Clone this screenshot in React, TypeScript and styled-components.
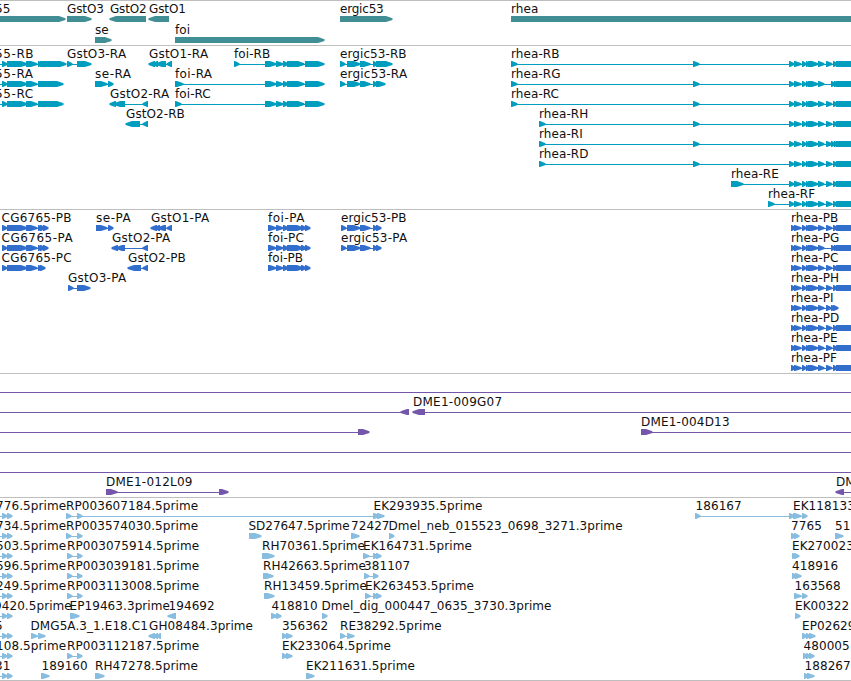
import React from 'react'
import styled, { createGlobalStyle } from 'styled-components'

type Span = [number, number]

interface Feature {
  name?: string
  // where the name starts, defaults to the start of the first block
  at?: number
  blocks: Span[]
  line?: Span
  reverse?: boolean
  spacing?: number
}

interface TrackData {
  id: string
  color: string
  rowHeight: number
  gap: number
  rows: Feature[][]
}

const VIEW_WIDTH = 851
const OFF = 870

const GlobalStyle = createGlobalStyle`
  body {
    margin: 0;
    background: #ffffff;
    overflow: hidden;
  }
`

const Viewer = styled.main`
  display: flex;
  flex-direction: column;
  width: ${VIEW_WIDTH}px;
  height: 681px;
  overflow: hidden;
  background: #ffffff;
  border-bottom: 1px solid #bebebe;
  box-sizing: border-box;
`

const TrackPanel = styled.section<{ $gap: number }>`
  display: flex;
  flex-direction: column;
  flex: none;
  border-top: 1px solid #bebebe;
  padding-bottom: ${({ $gap }) => $gap}px;
`

const Row = styled.div<{ $height: number }>`
  position: relative;
  height: ${({ $height }) => $height}px;
`

const Name = styled.span<{ $x: number; $spacing: number }>`
  position: absolute;
  top: 0;
  left: ${({ $x }) => $x}px;
  font-family: 'DejaVu Sans', sans-serif;
  font-size: 12px;
  line-height: 16px;
  letter-spacing: ${({ $spacing }) => $spacing}px;
  color: #111111;
  white-space: pre;
`

const Glyphs = styled.svg`
  display: block;
  overflow: hidden;
`

// long blocks keep a square tail, short ones are just the head
const arrow = ([from, to]: Span, reverse?: boolean) => {
  const head = Math.min(to - from - 1, 6)
  const tail = reverse ? to : from
  const tip = reverse ? from : to
  const dir = reverse ? -1 : 1
  const neck = tip - dir * head
  return `M${tail} 15V21H${neck}L${tip + dir * 0.5} 18.9V17.3L${neck} 15Z`
}

// exon sets shared by several isoforms
const foi: Span[] = [[265, 276], [276, 283], [283, 288], [287, 304], [305, 324]]
const foiP: Span[] = [[268, 276], [276, 283], [283, 288], [287, 303], [301, 306], [305, 310]]
const ergic: Span[] = [[340, 345], [347, 360], [360, 370], [373, 377]]
const ergicP: Span[] = [[341, 346], [347, 360], [360, 370], [373, 377], [376, 381]]
const cg6765: Span[] = [[2, 7], [7, 27], [26, 37], [38, 42], [40, 45]]
const left55: Span[] = [[2, 7], [7, 27], [26, 37]]
const rheaMid: Span[] = [[794, 801], [802, 806], [806, 809], [808, 818], [818, 824]]
const rheaEnd: Span[] = [[826, 832], [833, 837], [836, OFF]]
const rheaShort: Span[] = [[831, 835], [834, 838], [836, OFF]]

const rheaR = (name: string, first: Span[], end: Span[] = rheaEnd): Feature => ({
  name,
  blocks: [...first, [789, 794], ...rheaMid, ...end],
})
const rheaP = (name: string, end: Span[] = rheaEnd): Feature => ({ name, blocks: [[791, 795], ...rheaMid, ...end] })

const edgeRead = (name: string, at: number): Feature => ({ name, at, blocks: [[2, 7], [7, 12]], line: [0, 12] })
const rpRead = (name: string, x = 67): Feature => ({ name, at: x, blocks: [[x, x + 5], [77, 82]] })

const through: Feature = { blocks: [], line: [0, OFF] }

const tracks: TrackData[] = [
  {
    id: 'genes',
    color: '#418f95',
    rowHeight: 21,
    gap: 2,
    rows: [
      [
        { name: '55', at: -5, blocks: [[-20, 65]] },
        { name: 'GstO3', blocks: [[67, 91]], spacing: -0.1 },
        { name: 'GstO2', blocks: [[110, 146]], reverse: true, spacing: -0.2 },
        { name: 'GstO1', blocks: [[149, 169]], reverse: true, spacing: -0.1 },
        { name: 'ergic53', blocks: [[340, 392]], spacing: -0.2 },
        { name: 'rhea', blocks: [[511, OFF]] },
      ],
      [
        { name: 'se', blocks: [[95, 111]] },
        { name: 'foi', blocks: [[175, 324]] },
      ],
    ],
  },
  {
    id: 'transcripts',
    color: '#009dbf',
    rowHeight: 20,
    gap: 3,
    rows: [
      [
        { name: '55-RB', at: -5, blocks: [...left55, [38, 42], [40, 66]], line: [0, 66], spacing: 0.6 },
        { name: 'GstO3-RA', blocks: [[67, 72], [77, 91]], spacing: 0.2 },
        { name: 'GstO1-RA', blocks: [[149, 155], [153, 158], [156, 166], [167, 172]], reverse: true, spacing: 0.2 },
        { name: 'foi-RB', blocks: [[234, 239], ...foi] },
        { name: 'ergic53-RB', blocks: [...ergic, [376, 392]] },
        rheaR('rhea-RB', [[511, 517], [693, 699]]),
      ],
      [
        { name: '55-RA', at: -5, blocks: [...left55, [38, 63]], line: [0, 63], spacing: 0.6 },
        { name: 'se-RA', blocks: [[95, 107], [108, 113]], spacing: 0.5 },
        { name: 'foi-RA', blocks: [[175, 183], ...foi], spacing: 0.35 },
        { name: 'ergic53-RA', blocks: [...ergic, [376, 385]], spacing: 0.2 },
        rheaR('rhea-RG', [[511, 517], [693, 699]], rheaShort),
      ],
      [
        { name: '55-RC', at: -5, blocks: [...left55, [38, 63]], line: [0, 63], spacing: 0.6 },
        { name: 'GstO2-RA', blocks: [[110, 116], [114, 125], [143, 148]], reverse: true, spacing: 0.2 },
        { name: 'foi-RC', blocks: [[175, 181], ...foi] },
        rheaR('rhea-RC', [[511, 517], [693, 699]]),
      ],
      [
        { name: 'GstO2-RB', blocks: [[126, 140], [143, 148]], reverse: true },
        rheaR('rhea-RH', [[539, 545], [693, 699]]),
      ],
      [rheaR('rhea-RI', [[539, 545], [693, 699]], [[826, 832], ...rheaShort])],
      [rheaR('rhea-RD', [[539, 545], [693, 699]])],
      [rheaR('rhea-RE', [[731, 743]])],
      [rheaR('rhea-RF', [[768, 774]])],
    ],
  },
  {
    id: 'proteins',
    color: '#326fcd',
    rowHeight: 20,
    gap: 3,
    rows: [
      [
        { name: 'CG6765-PB', at: 1.5, blocks: [...cg6765, [43, 48]], spacing: 0.25 },
        { name: 'se-PA', blocks: [[96, 107], [108, 113]], spacing: 0.5 },
        { name: 'GstO1-PA', blocks: [[151, 157], [155, 160], [158, 166], [167, 172]], reverse: true, spacing: 0.25 },
        { name: 'foi-PA', blocks: foiP, spacing: 0.5 },
        { name: 'ergic53-PB', blocks: ergicP },
        rheaP('rhea-PB'),
      ],
      [
        { name: 'CG6765-PA', at: 1.5, blocks: [...cg6765, [43, 48]], spacing: 0.5 },
        { name: 'GstO2-PA', blocks: [[112, 118], [116, 125], [143, 148]], reverse: true, spacing: 0.25 },
        { name: 'foi-PC', blocks: foiP, spacing: 0.2 },
        { name: 'ergic53-PA', blocks: ergicP, spacing: 0.25 },
        rheaP('rhea-PG', rheaShort),
      ],
      [
        { name: 'CG6765-PC', at: 1.5, blocks: cg6765, spacing: 0.25 },
        { name: 'GstO2-PB', blocks: [[128, 141], [143, 148]], reverse: true },
        { name: 'foi-PB', blocks: foiP },
        rheaP('rhea-PC'),
      ],
      [{ name: 'GstO3-PA', blocks: [[68, 73], [77, 90]], spacing: 0.25 }, rheaP('rhea-PH')],
      [rheaP('rhea-PI', [[826, 831], [831, 835], [833, 838]])],
      [rheaP('rhea-PD')],
      [rheaP('rhea-PE')],
      [rheaP('rhea-PF')],
    ],
  },
  {
    id: 'clones',
    color: '#7457aa',
    rowHeight: 20,
    gap: 3,
    rows: [
      [through],
      [
        { blocks: [[401, 409]], line: [0, 409], reverse: true },
        { name: 'DME1-009G07', blocks: [[413, 425]], line: [413, OFF], reverse: true, spacing: 0.25 },
      ],
      [
        { blocks: [[358, 369]], line: [0, 369] },
        { name: 'DME1-004D13', blocks: [[641, 652]], line: [641, OFF], spacing: 0.2 },
      ],
      [through],
      [through],
      [
        { name: 'DME1-012L09', blocks: [[106, 117], [219, 228]], spacing: 0.25 },
        { name: 'DM', blocks: [[836, 844]], line: [836, OFF], reverse: true },
      ],
    ],
  },
  {
    id: 'insertions',
    color: '#88bddf',
    rowHeight: 20,
    gap: 2,
    rows: [
      [
        edgeRead('776.5prime', -4),
        { name: 'RP003607184.5prime', blocks: [[66, 71], [77, 82]], line: [66, 373] },
        { name: 'EK293935.5prime', at: 373.5, blocks: [[373, 380], [377, 384]] },
        { name: '186167', at: 695.5, blocks: [[695, 700], [789, 794], [793, 801], [802, 807]] },
        { name: 'EK118133', at: 793, blocks: [] },
      ],
      [
        edgeRead('734.5prime', -4),
        rpRead('RP003574030.5prime', 66),
        { name: 'SD27647.5prime', at: 248.5, blocks: [[249, 261]], spacing: -0.03 },
        { name: '72427', blocks: [[351, 359]] },
        { name: 'Dmel_neb_015523_0698_3271.3prime', at: 388.5, blocks: [[389, 394]] },
        { name: '7765', blocks: [[791, 796], [794, 799]] },
        { name: '51', blocks: [[835, 843]] },
      ],
      [
        edgeRead('503.5prime', -4),
        rpRead('RP003075914.5prime'),
        { name: 'RH70361.5prime', blocks: [[262, 274]] },
        { name: 'EK164731.5prime', blocks: [[363, 369], [373, 378], [376, 381]] },
        { name: 'EK270023', blocks: [[792, 796], [794, 799]] },
      ],
      [
        edgeRead('596.5prime', -4),
        rpRead('RP003039181.5prime'),
        { name: 'RH42663.5prime', blocks: [[263, 273]] },
        { name: '381107', blocks: [[364, 369], [373, 378]] },
        { name: '418916', blocks: [[792, 797], [795, 801]] },
      ],
      [
        edgeRead('249.5prime', -4),
        rpRead('RP003113008.5prime'),
        { name: 'RH13459.5prime', blocks: [[264, 274]] },
        { name: 'EK263453.5prime', blocks: [[365, 370], [373, 378], [376, 381]] },
        { name: '163568', at: 794.5, blocks: [[794, 801], [802, 807]] },
      ],
      [
        edgeRead('9420.5prime', -6),
        { name: 'EP19463.3prime', at: 69.5, blocks: [[70, 79]] },
        { name: '194692', at: 168.5, blocks: [[168, 176]], reverse: true },
        { name: '418810', at: 271.5, blocks: [[271, 277], [276, 281]] },
        { name: 'Dmel_dig_000447_0635_3730.3prime', at: 321.5, blocks: [[322, 327]] },
        { name: 'EK00322', blocks: [[795, 800]] },
      ],
      [
        edgeRead('5', -5),
        { name: 'DMG5A.3_1.E18.C1', at: 30.5, blocks: [[31, 37], [38, 45]] },
        { name: 'GH08484.3prime', blocks: [[149, 155], [154, 158], [157, 161]], reverse: true },
        { name: '356362', blocks: [[282, 287], [286, 292]] },
        { name: 'RE38292.5prime', blocks: [[340, 345], [347, 354]] },
        { name: 'EP02629', blocks: [[802, 807], [806, 810], [809, 815]] },
      ],
      [
        edgeRead('108.5prime', -4),
        rpRead('RP003112187.5prime'),
        { name: 'EK233064.5prime', blocks: [[282, 287], [286, 292]] },
        { name: '480005', at: 803.5, blocks: [[803, 807], [806, 810], [809, 814]] },
      ],
      [
        edgeRead('31', -5),
        { name: '189160', at: 41.5, blocks: [[41, 49]] },
        { name: 'RH47278.5prime', blocks: [[95, 104]] },
        { name: 'EK211631.5prime', blocks: [[306, 314]] },
        { name: '188267', at: 804.5, blocks: [[804, 808], [807, 814]] },
      ],
    ],
  },
]

const FeatureGlyph: React.FC<{ feature: Feature }> = ({ feature }) => {
  const { blocks, reverse } = feature
  const line = feature.line || (blocks.length > 1 ? [blocks[0][0], blocks[blocks.length - 1][1]] : null)

  return (
    <g>
      {line && <rect x={line[0]} y={18} width={line[1] - line[0]} height={1} />}
      {blocks.map((block) => (
        <path key={block[0]} d={arrow(block, reverse)} />
      ))}
    </g>
  )
}

const Track: React.FC<{ track: TrackData }> = ({ track }) => (
  <TrackPanel $gap={track.gap}>
    {track.rows.map((features, index) => (
      <Row key={index} $height={track.rowHeight}>
        {/* blocks end on pixel 21, one below the shorter rows */}
        <Glyphs width={VIEW_WIDTH} height={21} viewBox={`0 0 ${VIEW_WIDTH} 21`} fill={track.color}>
          {features.map((feature, i) => (
            <FeatureGlyph key={i} feature={feature} />
          ))}
        </Glyphs>
        {features.map(
          (feature) =>
            feature.name && (
              <Name key={feature.name} $x={feature.at ?? feature.blocks[0][0]} $spacing={feature.spacing ?? 0.08}>
                {feature.name}
              </Name>
            ),
        )}
      </Row>
    ))}
  </TrackPanel>
)

const App: React.FC = () => (
  <>
    <GlobalStyle />
    <Viewer>
      {tracks.map((track) => (
        <Track key={track.id} track={track} />
      ))}
    </Viewer>
  </>
)

export default App
